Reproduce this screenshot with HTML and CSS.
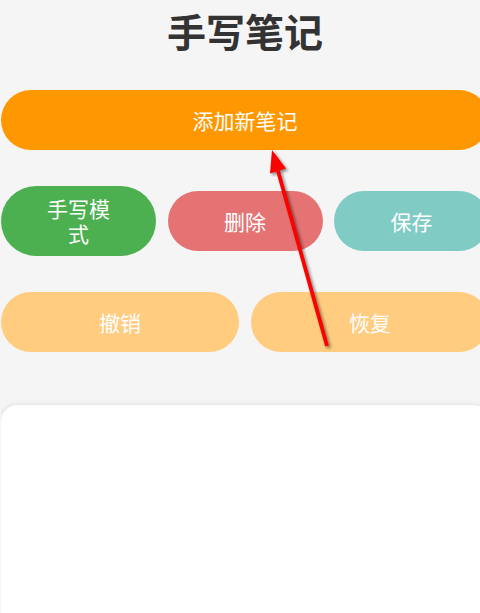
FILE: index.html
```html
<!DOCTYPE html>
<html lang="zh">
<head>
<meta charset="utf-8">
<title>手写笔记</title>
<link rel="stylesheet" href="styles.css">
</head>
<body>
<div class="page">
  <h1 class="title">手写笔记</h1>
  <div class="btn btn-add">添加新笔记</div>
  <div class="row">
    <div class="btn btn-pen">手写模式</div>
    <div class="btn btn-del">删除</div>
    <div class="btn btn-save">保存</div>
  </div>
  <div class="row">
    <div class="btn btn-soft">撤销</div>
    <div class="btn btn-soft">恢复</div>
  </div>
  <div class="card"></div>
  <svg class="arrow" width="480" height="613" viewBox="0 0 480 613" aria-hidden="true">
    <g class="arrow-g">
      <line x1="327" y1="346" x2="278" y2="171" stroke="#ff0000" stroke-width="3.8"/>
      <polygon points="272,150 286,168.5 270,173.5" fill="#ff0000"/>
    </g>
  </svg>
</div>
</body>
</html>
```
FILE: styles.css
```css
html, body {
  margin: 0;
  padding: 0;
  overflow: hidden;
  width: 480px;
  height: 613px;
  background: #f5f5f5;
}

.page {
  position: relative;
  width: 488px;
  height: 613px;
  overflow: hidden;
  margin-left: 1px;
  font-family: "Noto Sans CJK SC", "Noto Sans", sans-serif;
}

.title {
  margin: 0 0 30px;
  font-size: 39px;
  line-height: 60px;
  font-weight: bold;
  color: #333333;
  text-align: center;
}

.btn {
  box-sizing: border-box;
  display: flex;
  align-items: center;
  justify-content: center;
  text-align: center;
  min-height: 60px;
  padding: 10px 40px;
  border-radius: 999px;
  color: #ffffff;
  font-size: 21px;
  line-height: 25px;
}

.btn-add {
  background: #ff9800;
}

.row {
  display: flex;
  align-items: center;
  gap: 11.5px;
  margin-top: 36px;
}

.row .btn {
  flex: 1 1 0;
  min-width: 0;
}

.btn-pen {
  background: #4caf50;
}

.btn-del {
  background: #e57373;
}

.btn-save {
  background: #80cbc4;
}

.btn-soft {
  background: #ffcc80;
}

.card {
  margin-top: 53px;
  height: 209px;
  background: #ffffff;
  border-radius: 16px 16px 0 0;
  box-shadow: 0 0 5px rgba(0, 0, 0, 0.12);
}

.arrow {
  position: absolute;
  top: 0;
  left: -1px;
  pointer-events: none;
}

.arrow-g {
  filter: drop-shadow(2px 2px 1.5px rgba(0, 0, 0, 0.45));
}
```
